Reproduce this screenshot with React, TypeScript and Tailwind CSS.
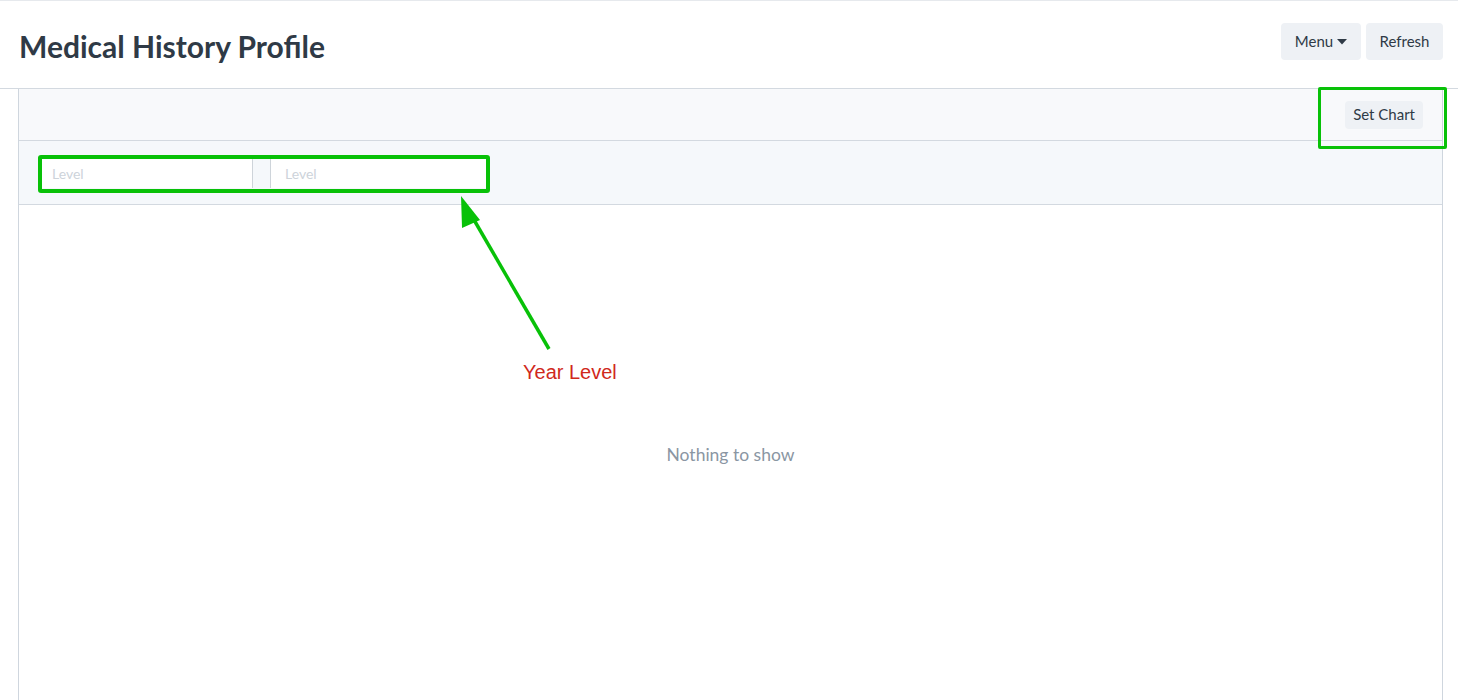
import React from "react";

export default function App() {
  return (
    <div className="relative w-full h-[700px] overflow-hidden bg-white border-t border-[#e6e9ed] text-[#2f3a46]" style={{ fontFamily: "Lato, 'Noto Sans', sans-serif" }}>
      {/* Header */}
      <div className="flex justify-between items-start h-[88px] pl-[19px] pr-[15px] border-b border-[#d3d9e0]">
        <h1 className="mt-[27px] text-[30px] leading-[36px] font-bold text-[#2f3a46]">Medical History Profile</h1>
        <div className="mt-[22px] flex gap-[5px]">
          <button className="h-[37px] w-[80px] rounded-[4px] bg-[#eef1f5] text-[15px] text-[#2f3a46] flex items-center justify-center gap-[4px]">
            Menu
            <svg width="10" height="6" viewBox="0 0 10 6"><path d="M0 0h10L5 5.5z" fill="#2f3a46" /></svg>
          </button>
          <button className="h-[37px] w-[77px] rounded-[4px] bg-[#eef1f5] text-[15px] text-[#2f3a46]">Refresh</button>
        </div>
      </div>

      {/* Panel */}
      <div className="ml-[18px] mr-[15px] h-[700px] border-l border-r border-[#cfd6de]">
        <div className="h-[52px] bg-[#f8f9fb] border-b border-[#d3d9e0] flex items-center justify-end pr-[19px]">
          <button className="h-[28px] px-[8px] rounded-[4px] bg-[#eef1f5] text-[15px] text-[#2f3a46]">Set Chart</button>
        </div>
        <div className="h-[64px] bg-[#f5f8fb] border-b border-[#d3d9e0] pt-[17px] pl-[23px]">
          <div className="flex h-[30px]">
            <input placeholder="Level" className="w-[210px] h-[30px] bg-white px-[10px] text-[14px] placeholder:text-[#cdd3da] outline-none" />
            <div className="w-[19px] h-[30px] bg-[#f5f8fb] border-x border-[#ced4da]" />
            <input placeholder="Level" className="w-[215px] h-[30px] bg-white px-[14px] text-[14px] placeholder:text-[#cdd3da] outline-none" />
          </div>
        </div>
        <div className="pt-[237px] text-center text-[17.5px] text-[#8a96a3]">Nothing to show</div>
      </div>

      {/* Annotations */}
      <div className="absolute left-[38px] top-[154px] w-[452px] h-[38px] border-[4px] border-[#08c108] rounded-[3px]" />
      <div className="absolute left-[1318px] top-[86px] w-[129px] h-[62px] border-[3px] border-[#08c108] rounded-[2px]" />
      <svg className="absolute left-0 top-0 pointer-events-none" width="1458" height="700">
        <line x1="549" y1="348" x2="470" y2="212" stroke="#08c108" strokeWidth="3.5" />
        <polygon points="461,195 480,219 462,227" fill="#08c108" />
      </svg>
      <div className="absolute left-[523px] top-[359px] text-[20px] leading-[24px] text-[#d0281c]" style={{ fontFamily: "'Liberation Sans', Arial, sans-serif" }}>Year Level</div>
    </div>
  );
}
